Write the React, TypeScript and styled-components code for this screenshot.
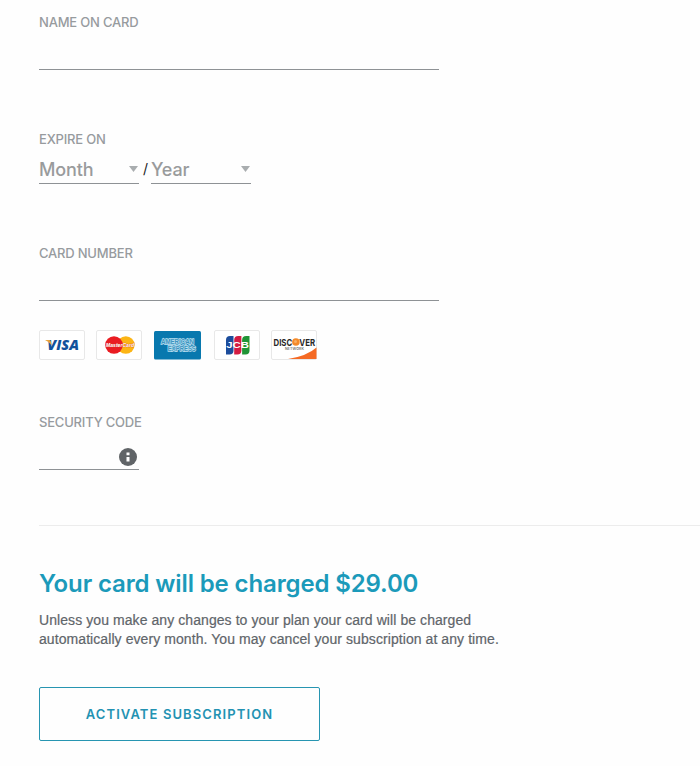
import React from "react";
import styled, { createGlobalStyle } from "styled-components";

const GlobalStyle = createGlobalStyle`
  * { box-sizing: border-box; }
  body { margin: 0; background: #fefefe; overflow: hidden; }
`;

const Page = styled.form`
  width: 100%;
  height: 766px;
  padding: 14px 0 0 39px;
  font-family: Inter, "Liberation Sans", sans-serif;
  overflow: hidden;
`;

const Field = styled.div<{ $gap: number }>`
  display: flex;
  flex-direction: column;
  align-items: flex-start;
  margin-bottom: ${(p) => p.$gap}px;
`;

const Label = styled.label`
  height: 16px;
  font-size: 13px;
  font-weight: 500;
  line-height: 16px;
  letter-spacing: -0.2px;
  color: #979b9e;
  white-space: nowrap;
`;

const InputLine = styled.div<{ $width: number }>`
  display: flex;
  align-items: center;
  justify-content: flex-end;
  width: ${(p) => p.$width}px;
  height: 40px;
  border-bottom: 1px solid #8e9295;
`;

const CodeLine = styled(InputLine)`
  height: 40px;
`;

const Input = styled.input`
  flex: 1;
  min-width: 0;
  height: 100%;
  padding: 0;
  border: 0;
  outline: 0;
  background: transparent;
  font: 18px Inter, sans-serif;
`;

const InfoIcon = styled.svg`
  flex: none;
  width: 18px;
  height: 18px;
  margin: 14px 2px 0 0;
`;

const DateRow = styled.div`
  display: flex;
  margin-top: 9px;
`;

const Select = styled.div`
  display: flex;
  align-items: center;
  justify-content: space-between;
  width: 100px;
  height: 28px;
  padding-right: 1px;
  border-bottom: 1px solid #8e9295;
  font-size: 18px;
  font-weight: 500;
  line-height: 27px;
  letter-spacing: -0.15px;
  color: #999b9c;
`;

const Arrow = styled.svg`
  width: 9px;
  height: 6px;
  margin-top: -1px;
`;

const Slash = styled.span`
  width: 12px;
  padding-left: 1px;
  text-align: center;
  font: 14px/25px Inter, sans-serif;
  color: #222;
`;

const Cards = styled.div`
  display: flex;
  height: 30px;
  margin-bottom: 54px;
`;

const CardLogo = styled.svg<{ $gap: number }>`
  flex: none;
  width: 47px;
  height: 30px;
  margin-right: ${(p) => p.$gap}px;
`;

const Summary = styled.section`
  padding-top: 42px;
  border-top: 1px solid #ececec;
`;

const Heading = styled.h2`
  margin: 0 0 11px;
  height: 32px;
  font-size: 24px;
  line-height: 32px;
  font-weight: 600;
  letter-spacing: -0.13px;
  color: #1b9aba;
  white-space: nowrap;
`;

const Note = styled.p`
  margin: 0 0 38px;
  font: 14px/19px "Liberation Sans", Arial, sans-serif;
  letter-spacing: 0.075px;
  color: #5f656a;
  -webkit-text-stroke: 0.2px #5f656a;
  white-space: nowrap;
`;

const Button = styled.button`
  display: block;
  width: 281px;
  height: 54px;
  padding: 0;
  border: 1px solid #2795b1;
  border-radius: 2px;
  background: transparent;
  font: 600 13px Inter, sans-serif;
  letter-spacing: 1.1px;
  color: #2392b2;
`;

const Dropdown = ({ text }: { text: string }) => (
  <Select role="combobox" aria-label={text}>
    {text}
    <Arrow viewBox="0 0 9 6"><path d="M0 0h9L4.5 6z" fill="#a9adaf" /></Arrow>
  </Select>
);

const Frame = ({ fill = "#fff", stroke = "#e8e8e8", width = 45 }) => (
  <rect x=".5" y=".5" width={width} height="29" rx="1.5" fill={fill} stroke={stroke} />
);

const Visa = () => (
  <CardLogo $gap={10} viewBox="0 0 47 30" aria-label="Visa">
    <Frame />
    <text x="8.3" y="20" textLength="31.7" lengthAdjust="spacingAndGlyphs" fontFamily="Open Sans" fontWeight="800" fontStyle="italic" fontSize="14" fill="#12529b">VISA</text>
    <path d="M6 10h4q1.5 0 1.8 1.4l.9 4Q10.4 11.8 6 10z" fill="#e9a33b" />
  </CardLogo>
);

const MasterCard = () => (
  <CardLogo $gap={11} viewBox="0 0 47 30" aria-label="MasterCard">
    <Frame />
    <circle cx="29.8" cy="15" r="8.8" fill="#fcb514" />
    <circle cx="18" cy="15" r="8.8" fill="#ea1c22" />
    <text x="10" y="17.2" textLength="28" lengthAdjust="spacingAndGlyphs" fontFamily="Liberation Sans" fontWeight="700" fontStyle="italic" fontSize="6.2" fill="#fff" stroke="#d8382c" strokeWidth=".5" paintOrder="stroke">MasterCard</text>
  </CardLogo>
);

const Amex = () => (
  <CardLogo $gap={13} viewBox="0 0 47 30" aria-label="American Express">
    <rect y="1" width="47" height="28.5" rx="1.5" fill="#0878ae" />
    <g fontFamily="Liberation Sans" fontWeight="700" fontSize="7" fill="#3a94c0" stroke="#b9dff0" strokeWidth="1.5" paintOrder="stroke">
      <text x="7" y="14.3" textLength="33" lengthAdjust="spacingAndGlyphs">AMERICAN</text>
      <text x="13.8" y="20.8" textLength="28" lengthAdjust="spacingAndGlyphs">EXPRESS</text>
    </g>
  </CardLogo>
);

const Jcb = () => (
  <CardLogo $gap={10} viewBox="0 0 47 30" aria-label="JCB">
    <Frame />
    <path d="M12 10q0-4 4-4h3.5v14.5q0 4-4 4H12z" fill="#1c4d9c" />
    <path d="M20.2 10q0-4 4-4h3.2v14.5q0 4-4 4h-3.2z" fill="#d31c42" />
    <path d="M28.1 10q0-4 4-4h3.4v14.5q0 4-4 4h-3.4z" fill="#209436" />
    <text x="12.2" y="18.4" textLength="22.8" lengthAdjust="spacingAndGlyphs" fontFamily="Liberation Sans" fontWeight="700" fontSize="8.4" fill="#fff">JCB</text>
  </CardLogo>
);

const Discover = () => (
  <CardLogo $gap={0} viewBox="0 0 47 30" aria-label="Discover Network">
    <Frame />
    <path d="M45.5 17.5V29H17Q36 26 45.5 17.5z" fill="#f56a24" />
    <g fontFamily="Inter" fontWeight="700" fontSize="9.6" fill="#282828">
      <text x="2.5" y="15.5" textLength="18.7" lengthAdjust="spacingAndGlyphs">DISC</text>
      <text x="28.3" y="15.5" textLength="15.8" lengthAdjust="spacingAndGlyphs">VER</text>
    </g>
    <circle cx="24.9" cy="12" r="3.8" fill="#f58a2a" />
    <circle cx="24.5" cy="11.6" r="1.5" fill="#f9ae63" />
    <text x="14" y="19.7" textLength="19" fontFamily="Inter" fontWeight="500" fontSize="3.6" fill="#555">NETWORK</text>
  </CardLogo>
);

export default function App() {
  return (
    <>
      <GlobalStyle />
      <Page>
        <Field $gap={61}>
          <Label htmlFor="name">NAME ON CARD</Label>
          <InputLine $width={400}><Input id="name" /></InputLine>
        </Field>
        <Field $gap={61}>
          <Label>EXPIRE ON</Label>
          <DateRow>
            <Dropdown text="Month" />
            <Slash>/</Slash>
            <Dropdown text="Year" />
          </DateRow>
        </Field>
        <Field $gap={29}>
          <Label htmlFor="number">CARD NUMBER</Label>
          <InputLine $width={400}><Input id="number" /></InputLine>
        </Field>
        <Cards>
          <Visa />
          <MasterCard />
          <Amex />
          <Jcb />
          <Discover />
        </Cards>
        <Field $gap={55}>
          <Label htmlFor="code">SECURITY CODE</Label>
          <CodeLine $width={100}>
            <Input id="code" />
            <InfoIcon viewBox="0 0 18 18">
              <circle cx="9" cy="9" r="9" fill="#606467" />
              <path d="M7.5 4.5h3v2.8h-3zM7.5 9h3v4.5h-3z" fill="#fff" />
            </InfoIcon>
          </CodeLine>
        </Field>
        <Summary>
          <Heading>Your card will be charged $29.00</Heading>
          <Note>
            Unless you make any changes to your plan your card will be charged
            <br />
            automatically every month. You may cancel your subscription at any time.
          </Note>
          <Button type="button">ACTIVATE SUBSCRIPTION</Button>
        </Summary>
      </Page>
    </>
  );
}
